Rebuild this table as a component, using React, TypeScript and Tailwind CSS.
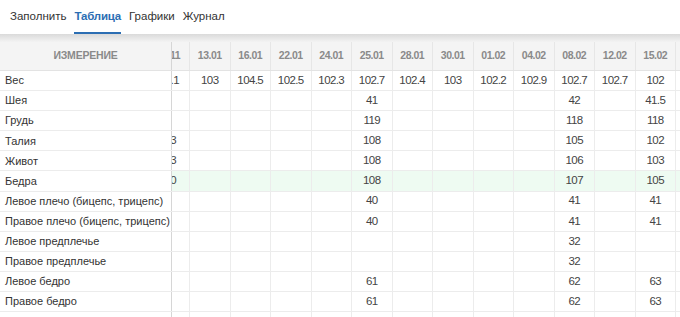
const DATES = ['30.11', '13.01', '16.01', '22.01', '24.01', '25.01', '28.01', '30.01', '01.02', '04.02', '08.02', '12.02', '15.02', '19.02'];

const ROWS: { label: string; values: (string | number)[]; highlight?: boolean }[] = [
  { label: 'Вес', values: ['104.1', 103, 104.5, 102.5, 102.3, 102.7, 102.4, 103, 102.2, 102.9, 102.7, 102.7, 102, ''] },
  { label: 'Шея', values: ['', '', '', '', '', 41, '', '', '', '', 42, '', 41.5, ''] },
  { label: 'Грудь', values: ['', '', '', '', '', 119, '', '', '', '', 118, '', 118, ''] },
  { label: 'Талия', values: ['113', '', '', '', '', 108, '', '', '', '', 105, '', 102, ''] },
  { label: 'Живот', values: ['113', '', '', '', '', 108, '', '', '', '', 106, '', 103, ''] },
  { label: 'Бедра', values: ['110', '', '', '', '', 108, '', '', '', '', 107, '', 105, ''], highlight: true },
  { label: 'Левое плечо (бицепс, трицепс)', values: ['', '', '', '', '', 40, '', '', '', '', 41, '', 41, ''] },
  { label: 'Правое плечо (бицепс, трицепс)', values: ['', '', '', '', '', 40, '', '', '', '', 41, '', 41, ''] },
  { label: 'Левое предплечье', values: ['', '', '', '', '', '', '', '', '', '', 32, '', '', ''] },
  { label: 'Правое предплечье', values: ['', '', '', '', '', '', '', '', '', '', 32, '', '', ''] },
  { label: 'Левое бедро', values: ['', '', '', '', '', 61, '', '', '', '', 62, '', 63, ''] },
  { label: 'Правое бедро', values: ['', '', '', '', '', 61, '', '', '', '', 62, '', 63, ''] },
  { label: 'Левая голень', values: ['', '', '', '', '', 40, '', '', '', '', 40, '', 40, ''] },
];

const TABS = ['Заполнить', 'Таблица', 'Графики', 'Журнал'];

const GRID = 'grid grid-cols-[172px_18px_repeat(14,40.5px)]';

export default function App() {
  return (
    <div className="w-[680px] h-[317px] overflow-hidden bg-white text-[#333]" style={{ fontFamily: '"Liberation Sans", Arial, sans-serif' }}>
      {/* Tabs */}
      <div className="flex h-[34px] pl-[10px] gap-[8px] text-[11.5px]">
        {TABS.map(t => (
          <div key={t} className={`flex items-center ${t === 'Таблица' ? 'font-bold text-[#2c6eb3] border-b-2 border-[#2c6eb3] pt-[2px] tracking-[-0.2px]' : 'text-[#333]'}`}>
            {t}
          </div>
        ))}
      </div>

      {/* shadow under tabs */}
      <div className="h-[8px] bg-gradient-to-b from-[#dadada] to-[#f3f3f3]" />

      <div className="w-[680px] overflow-hidden">
        {/* Header */}
        <div className={`${GRID} h-[29px] bg-[#f4f4f4] border-b border-[#e3e3e3] text-[10.5px] font-bold text-[#8a8a8a]`}>
          <div className="flex items-center justify-center border-r border-[#d6d6d6] tracking-[-0.2px]">ИЗМЕРЕНИЕ</div>
          <div className="flex items-center justify-end overflow-hidden whitespace-nowrap pr-[9px] border-r border-[#e6e6e6] tracking-[-0.5px]">{DATES[0]}</div>
          {DATES.slice(1).map(d => (
            <div key={d} className="flex items-center justify-center border-r border-[#e6e6e6] tracking-[-0.5px]">{d}</div>
          ))}
        </div>

        {/* Body */}
        {ROWS.map((r, idx) => (
          <div key={r.label} className={`${GRID} h-[20.1px] border-b border-[#ececec] ${r.highlight ? 'bg-[#eefbf2]' : 'bg-white'}`}>
            <div className="flex items-center pl-[5px] whitespace-nowrap overflow-hidden bg-white border-r border-[#d6d6d6] text-[11px] text-[#333]">{r.label}</div>
            <div className={`flex items-center justify-end overflow-hidden whitespace-nowrap border-r border-[#ececec] text-[11.5px] tracking-[-0.6px] text-[#444] ${idx === 0 ? 'pr-[10px]' : 'pr-[13px]'}`}>{r.values[0]}</div>
            {r.values.slice(1).map((v, i) => (
              <div key={i} className="flex items-center justify-center border-r border-[#ececec] text-[11.5px] tracking-[-0.6px] text-[#444]">{v}</div>
            ))}
          </div>
        ))}
      </div>
    </div>
  );
}
